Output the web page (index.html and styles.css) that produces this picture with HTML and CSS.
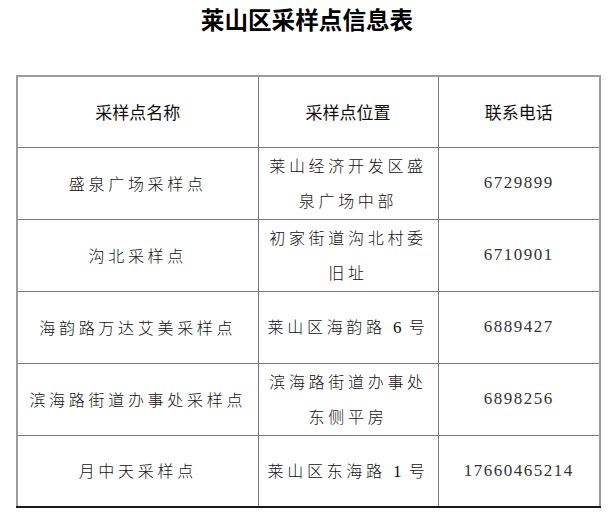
FILE: index.html
```html
<!DOCTYPE html>
<html lang="zh-CN">
<head>
<meta charset="utf-8">
<title>莱山区采样点信息表</title>
<link rel="stylesheet" href="styles.css">
</head>
<body>
<h1 class="title">莱山区采样点信息表</h1>
<table class="info">
  <colgroup>
    <col class="c-name">
    <col class="c-loc">
    <col class="c-tel">
  </colgroup>
  <thead>
    <tr>
      <th>采样点名称</th>
      <th>采样点位置</th>
      <th>联系电话</th>
    </tr>
  </thead>
  <tbody>
    <tr>
      <td class="cn">盛泉广场采样点</td>
      <td class="cn loc">莱山经济开发区盛泉广场中部</td>
      <td class="num">6729899</td>
    </tr>
    <tr>
      <td class="cn">沟北采样点</td>
      <td class="cn loc">初家街道沟北村委旧址</td>
      <td class="num">6710901</td>
    </tr>
    <tr>
      <td class="cn">海韵路万达艾美采样点</td>
      <td class="cn loc one">莱山区海韵路 <span class="dg">6</span> 号</td>
      <td class="num">6889427</td>
    </tr>
    <tr>
      <td class="cn">滨海路街道办事处采样点</td>
      <td class="cn loc">滨海路街道办事处东侧平房</td>
      <td class="num">6898256</td>
    </tr>
    <tr>
      <td class="cn">月中天采样点</td>
      <td class="cn loc one">莱山区东海路 <span class="dg">1</span> 号</td>
      <td class="num">17660465214</td>
    </tr>
  </tbody>
</table>
</body>
</html>
```

FILE: styles.css
```css
html, body {
  margin: 0;
  padding: 0;
  background: #ffffff;
}

body {
  width: 614px;
  color: #111111;
  font-family: "Noto Sans CJK SC", "Liberation Serif", serif;
}

.title {
  margin: 0 0 37px 0;
  padding-left: 16px;
  width: 582px;
  height: 38px;
  line-height: 38px;
  text-align: center;
  font-size: 23.6px;
  font-weight: 700;
  color: #000000;
  letter-spacing: 0;
}

.info {
  margin-left: 16px;
  width: 583px;
  border-collapse: collapse;
  table-layout: fixed;
  border-top: 2px solid #9c9c9c;
  border-left: 2px solid #9c9c9c;
  border-right: 2px solid #9c9c9c;
  border-bottom: 2px solid #1a1a1a;
}

.c-name { width: 241px; }
.c-loc { width: 180px; }
.c-tel { width: 162px; }

.info th,
.info td {
  border: 1px solid #7a7a7a;
  height: 72px;
  padding: 0 8px;
  text-align: center;
  vertical-align: middle;
  box-sizing: border-box;
}

.info tr:last-child td {
  border-bottom: 2px solid #1a1a1a;
}

.info th:first-child,
.info td:first-child {
  border-left: 2px solid #9c9c9c;
}

.info th:last-child,
.info td:last-child {
  border-right: 2px solid #9c9c9c;
}

.info thead th {
  height: 71px;
  border-top: 2px solid #9c9c9c;
  font-size: 17px;
  font-weight: 400;
  color: #111111;
}

.cn {
  font-size: 16px;
  font-weight: 300;
  letter-spacing: 3.7px;
  line-height: 35px;
  padding-left: 10px;
  padding-right: 6px;
}

.loc {
  padding-left: 11px;
  padding-right: 8px;
}

.one {
  white-space: nowrap;
  padding-left: 6px;
  padding-right: 4px;
}

.dg {
  font-family: "Liberation Serif", serif;
  font-size: 17px;
  letter-spacing: 0;
}

.num {
  font-family: "Liberation Serif", serif;
  font-size: 17px;
  font-weight: 400;
  color: #333333;
  letter-spacing: 1.5px;
  padding-left: 9px;
}
```
